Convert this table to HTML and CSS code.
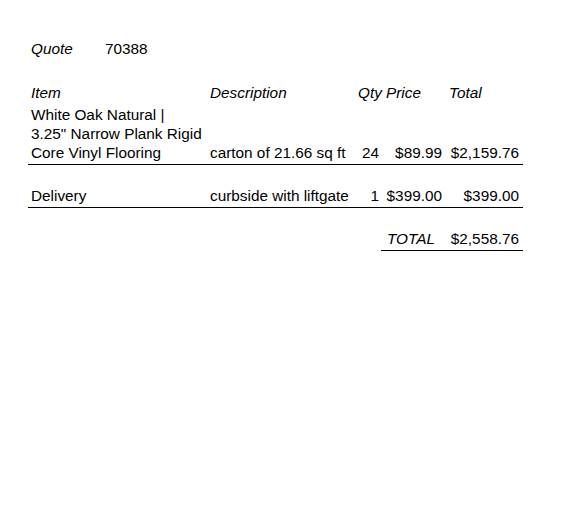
FILE: index.html
```html
<!DOCTYPE html>
<html lang="en">
<head>
  <meta charset="UTF-8" />
  <title>Quote 70388</title>
  <link rel="stylesheet" href="styles.css">
</head>
<body>
  <div class="quote">
    <div class="quote-head">
      <span class="label">Quote</span><span class="number">70388</span>
    </div>

    <table class="lines">
      <colgroup>
        <col class="c-item">
        <col class="c-desc">
        <col class="c-qty">
        <col class="c-price">
        <col class="c-total">
      </colgroup>
      <tr class="head">
        <th>Item</th>
        <th>Description</th>
        <th>Qty</th>
        <th class="h-price">Price</th>
        <th>Total</th>
      </tr>
      <tr class="row">
        <td>White Oak Natural |<br>3.25" Narrow Plank Rigid<br>Core Vinyl Flooring</td>
        <td>carton of 21.66 sq ft</td>
        <td class="num">24</td>
        <td class="num">$89.99</td>
        <td class="num">$2,159.76</td>
      </tr>
      <tr class="spacer"><td colspan="5"></td></tr>
      <tr class="row">
        <td>Delivery</td>
        <td>curbside with liftgate</td>
        <td class="num">1</td>
        <td class="num">$399.00</td>
        <td class="num">$399.00</td>
      </tr>
      <tr class="spacer"><td colspan="5"></td></tr>
      <tr class="sum">
        <td colspan="3"></td>
        <td class="sum-label">TOTAL</td>
        <td class="num">$2,558.76</td>
      </tr>
    </table>
  </div>
</body>
</html>
```

FILE: styles.css
```css
body {
  margin: 0;
  font-family: "Liberation Sans", Arial, sans-serif;
  font-size: 15.33px;
  line-height: 18.7px;
  color: #000;
  background: #fff;
}

.quote {
  padding: 40px 28px 0 28px;
  width: 495px;
}

.quote-head {
  padding-left: 3px;
}

.quote-head .label {
  font-style: italic;
  display: inline-block;
  width: 74px;
}

.lines {
  margin-top: 25px;
  width: 495px;
  border-collapse: collapse;
  table-layout: fixed;
}

.c-item { width: 179px; }
.c-desc { width: 148px; }
.c-qty { width: 26px; }
.c-price { width: 65px; }
.c-total { width: 77px; }

th {
  font-weight: normal;
  font-style: italic;
  text-align: left;
  padding: 0 3px 4px 3px;
}

th.h-price {
  padding-left: 5px;
}

td {
  padding: 0 3px;
  vertical-align: bottom;
}

.num {
  text-align: right;
}

.row td {
  border-bottom: 1px solid #000;
  padding-bottom: 1px;
}

.row td.num:nth-child(3) {
  padding-right: 2px;
}

.spacer td {
  height: 22.5px;
  padding: 0;
}

.sum td.sum-label,
.sum td.num {
  border-bottom: 1px solid #000;
  padding-bottom: 1px;
}

.sum-label {
  font-style: italic;
  padding-left: 6px;
}

.row td.num,
.sum td.num {
  padding-right: 4px;
}
```
